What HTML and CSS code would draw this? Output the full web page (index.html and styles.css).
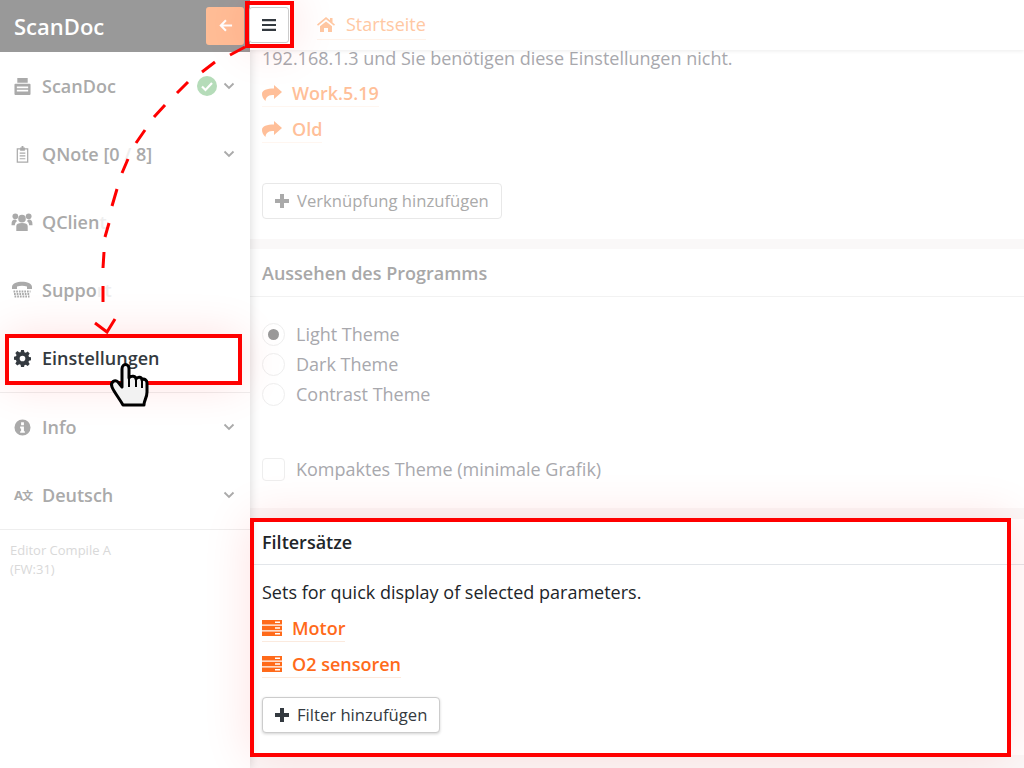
FILE: index.html
```html
<!DOCTYPE html>
<html lang="de">
<head>
<meta charset="utf-8">
<title>ScanDoc</title>
<link rel="stylesheet" href="styles.css">
</head>
<body>
<div class="app">
  <aside class="sidebar">
    <header class="brand">
      <span class="brand-name">ScanDoc</span>
      <span class="brand-back"><svg viewBox="0 0 16 16" width="15" height="15"><path d="M15 8H3M8.500 2.500L3 8l5.500 5.500" fill="none" stroke="#fff" stroke-width="2.200"/></svg></span>
    </header>
    <nav class="nav">
      <a class="item"><svg class="ico" viewBox="0 0 18 18"><path fill-rule="evenodd" d="M3.500 0h11v5h-11zM1.500 6h15q1 0 1 1v10q0 1-1 1h-15q-1 0-1-1V7q0-1 1-1zM3 9v1.800h12V9zM3 12.500v1.800h12v-1.800z"/></svg><span class="lbl">ScanDoc</span><span class="ok"><svg viewBox="0 0 20 20" width="20" height="20"><circle cx="10" cy="10" r="10" fill="#b5dcb9"/><path d="M5 10.500l3.500 3.500L15 7" fill="none" stroke="#fff" stroke-width="2.200"/></svg></span><svg class="chev" viewBox="0 0 12 8"><path d="M1.500 1.500L6 6l4.500-4.500"/></svg></a>
      <a class="item"><svg class="ico" viewBox="0 0 18 18"><path d="M3.500 3h11v14h-11zM6 7.500h6M6 10.500h6M6 13.500h6" fill="none" stroke="#aaa" stroke-width="1.300"/><path d="M6.500 1.500h1.500V0h2v1.500h1.500V5h-5z"/></svg><span class="lbl">QNote [0 <span class="ghost">/</span> 8]</span><svg class="chev" viewBox="0 0 12 8"><path d="M1.500 1.500L6 6l4.500-4.500"/></svg></a>
      <a class="item"><svg class="ico people" viewBox="0 0 22 21"><circle cx="11" cy="7" r="4"/><circle cx="4" cy="4.500" r="3"/><circle cx="18" cy="4.500" r="3"/><path d="M5 20v-5c0-2.500 2-3.500 6-3.500s6 1 6 3.500v5zM0 13c0-3 1-5 4-5l2 1.500c-1.500 1-2.500 2.500-2.500 4.500H0zM22 13c0-3-1-5-4-5l-2 1.500c1.500 1 2.500 2.500 2.500 4.500H22z"/></svg><span class="lbl">QClien<span class="ghost">t</span></span></a>
      <a class="item"><svg class="ico people" viewBox="0 0 22 18"><path d="M1 6c0-7 20-7 20 0v2h-5V5.500c-3-1-7-1-10 0V8H1z"/><path d="M2.500 10.500h17M3 13h16M3.500 15.500h15" stroke="#aaa" stroke-width="1.800" stroke-dasharray="1.700 1" fill="none"/></svg><span class="lbl">Suppo<span class="ghost">rt</span></span></a>
      <a class="item active"><svg class="ico" viewBox="0 0 18 18"><path fill-rule="evenodd" d="M7.500 0h3l.5 2.400 1.500.6 2-1.300 2.100 2.100-1.300 2 .6 1.500 2.400.5v3l-2.400.5-.6 1.500 1.300 2-2.100 2.100-2-1.300-1.500.6-.5 2.400h-3L7 15.600l-1.500-.6-2 1.300-2.100-2.100 1.300-2-.6-1.500L0 10.200v-3l2.100-.5.600-1.500-1.300-2 2.100-2.100 2 1.300L7 2.400zM9 6a3 3 0 1 0 0 6 3 3 0 0 0 0-6z"/></svg><span class="lbl">Einstellungen</span></a>
      <a class="item ruled"><svg class="ico" viewBox="0 0 18 18"><path fill-rule="evenodd" d="M9 .5a8.500 8.500 0 1 1 0 17 8.500 8.500 0 0 1 0-17zM7.500 3.500v3h3v-3zM6.500 8v2h1v3h-1v1.500h5V13h-1V8z"/></svg><span class="lbl">Info</span><svg class="chev" viewBox="0 0 12 8"><path d="M1.500 1.500L6 6l4.500-4.500"/></svg></a>
      <a class="item"><span class="ico-lang">A<span class="zh">文</span></span><span class="lbl">Deutsch</span><svg class="chev" viewBox="0 0 12 8"><path d="M1.500 1.500L6 6l4.500-4.500"/></svg></a>
    </nav>
    <footer class="side-foot">Editor Compile A<br>(FW:31)</footer>
  </aside>

  <div class="main">
    <div class="topbar">
      <span class="burger"><svg viewBox="0 0 14 12" width="14" height="12"><path d="M0 0h14v2.200H0zM0 4.900h14v2.200H0zM0 9.800h14V12H0z"/></svg></span>
      <a class="crumb"><svg viewBox="0 0 18 15" width="18" height="15"><path d="M9 0l4 3.300V1h2.500v4.400L18 7.500 17 8.700 9 2.200 1 8.700 0 7.500zM3 9.300L9 4.500l6 4.800V15h-4v-4H7v4H3z"/></svg>Startseite</a>
    </div>

    <section class="card first">
      <p class="line">192.168.1.3 und Sie benötigen diese Einstellungen nicht.</p>
      <div class="links faded">
        <div><a class="link"><svg viewBox="0 0 20 16" width="20" height="16"><path d="M12 0l8 7-8 7v-4C7 10 4 11 3.500 16 1 14 0 11 0 9 0 5 5 3.500 12 3.500z"/></svg><span>Work.5.19</span></a></div>
        <div><a class="link"><svg viewBox="0 0 20 16" width="20" height="16"><path d="M12 0l8 7-8 7v-4C7 10 4 11 3.500 16 1 14 0 11 0 9 0 5 5 3.500 12 3.500z"/></svg><span>Old</span></a></div>
      </div>
      <a class="btn faded-btn"><span class="plus"></span>Verknüpfung hinzufügen</a>
    </section>

    <section class="card second">
      <h2 class="card-head muted">Aussehen des Programms</h2>
      <div class="card-body options">
        <label class="opt"><span class="radio on"></span>Light Theme</label>
        <label class="opt"><span class="radio"></span>Dark Theme</label>
        <label class="opt"><span class="radio"></span>Contrast Theme</label>
        <label class="opt check"><span class="box"></span>Kompaktes Theme (minimale Grafik)</label>
      </div>
    </section>

    <section class="card third">
      <h2 class="card-head">Filtersätze</h2>
      <div class="card-body">
        <p class="line dark">Sets for quick display of selected parameters.</p>
        <div class="links">
          <div><a class="link strong"><svg viewBox="0 0 20 16" width="20" height="16"><path fill-rule="evenodd" d="M0 0h20v4.500H0zM13 1.500v1.500h5V1.500zM0 5.800h20v4.400H0zM13 7.300v1.400h5V7.300zM0 11.500h20V16H0zM13 13v1.500h5V13z"/></svg><span>Motor</span></a></div>
          <div><a class="link strong"><svg viewBox="0 0 20 16" width="20" height="16"><path fill-rule="evenodd" d="M0 0h20v4.500H0zM13 1.500v1.500h5V1.500zM0 5.800h20v4.400H0zM13 7.300v1.400h5V7.300zM0 11.500h20V16H0zM13 13v1.500h5V13z"/></svg><span>O2 sensoren</span></a></div>
        </div>
        <a class="btn"><span class="plus"></span>Filter hinzufügen</a>
      </div>
    </section>
  </div>
</div>

<div class="frame f-burger"></div>
<div class="frame f-settings"></div>
<div class="frame f-filter"></div>
<svg class="annot" viewBox="0 0 1024 768" width="1024" height="768">
  <path class="dash" d="M245 47L230 55M215 62L202 72M188 82L177 93M165 105L154 117M145 130L136 143M128 159L122 173M117 189L112 206M109 223L105 237M104 252L103 268M103 286L103 302"/>
  <path class="arrow" d="M95 323L107 332L115 319"/>
  <path class="hand" d="M123 405C119 398 114 392 112 387C110 382 115 379 118 382L122 387V369C122 363 129 363 129 369V378C131 375 136 376 136 379C138 376 142 377 142 380C144 378 147 380 147 383V392C147 398 144 400 144 405Z"/>
  <path class="hand-line" d="M129 378v9M136 379v8M142 380v8"/>
</svg>
</body>
</html>
```
FILE: styles.css
```css
* { box-sizing: border-box; }
html, body { margin: 0; height: 768px; overflow: hidden; background: #fff; }
body { font-family: "Open Sans", "Noto Sans", sans-serif; font-size: 18px; color: #a8a8ad; }
p, h2 { margin: 0; }

.app { display: flex; width: 1024px; height: 768px; }

/* sidebar */
.sidebar { width: 250px; flex: none; background: #fff; display: flex; flex-direction: column; position: relative; z-index: 1; box-shadow: 0 0 10px rgba(0,0,0,.16); }
.brand { height: 52px; background: #999; display: flex; align-items: center; justify-content: space-between; padding: 0 6px 0 14px; }
.brand-name { font-size: 22px; font-weight: 600; color: #fff; }
.brand-back { width: 38px; height: 38px; margin-top: -1px; border-radius: 3px; background: #ffbd96; display: flex; align-items: center; justify-content: center; }
.nav { display: flex; flex-direction: column; }
.item { height: 68px; display: flex; align-items: center; padding: 0 14px; font-size: 18px; font-weight: 600; color: #aaa; }
.item.active { color: #343a40; }
.item.ruled { border-top: 1px solid #eee; height: 69px; }
.ico { width: 17px; height: 17px; fill: #aaa; margin-right: 11px; flex: none; }
.ico.people { width: 22px; height: 20px; margin-left: -3px; margin-right: 9px; }
.active .ico { fill: #343a40; }
.ico-lang { width: 17px; margin-right: 11px; font-size: 13px; font-weight: 700; color: #aaa; white-space: nowrap; letter-spacing: -1px; }
.zh { font-family: "Noto Sans CJK SC", sans-serif; font-size: 11px; }
.lbl { flex: 1; white-space: nowrap; }
.ghost { color: #eee; }
.ok { display: flex; margin-right: 6px; }
.chev { width: 12px; height: 8px; fill: none; stroke: #aaa; stroke-width: 1.800; margin-right: 1px; flex: none; }
.side-foot { border-top: 1px solid #eee; padding: 11px 10px; font-size: 13px; line-height: 19px; color: #d9d9d9; }

/* main column */
.main { flex: 1; min-width: 0; display: flex; flex-direction: column; background: #faf8f8; }
.topbar { height: 50px; flex: none; background: #fff; display: flex; align-items: center; box-shadow: 0 1px 4px rgba(0,0,0,.08); position: relative; z-index: 2; }
.burger { width: 40px; height: 36px; margin: 7px 0 0 -1px; align-self: flex-start; background: #fff; border: 1px solid #ccc; border-radius: 3px; display: flex; align-items: center; justify-content: center; fill: #343a40; }
.crumb { margin-left: 28px; margin-top: -1px; display: flex; align-items: center; gap: 11px; font-size: 18px; color: #ffc8a3; fill: #ffc8a3; border-bottom: 1px solid #fff3ea; height: 31px; }

.card { background: #fff; padding: 0 12px; }
.first { height: 189px; flex: none; }
.line { font-size: 18px; line-height: 24px; color: #a8a8ad; margin-top: -4px; }
.line.dark { color: #212529; margin-top: 0; }
.links { display: flex; flex-direction: column; }
.links > div { height: 36px; display: flex; align-items: center; }
.link { display: inline-flex; align-items: center; gap: 10px; font-size: 18px; font-weight: 600; height: 28px; margin-top: 2px; color: #ff6a1a; fill: #ff6a1a; border-bottom: 1px solid #fbeade; }
.faded .link { color: #ffbf99; fill: #ffbf99; border-bottom-color: #fff6f0; }
.faded { margin-top: 4px; }
.btn { display: inline-flex; align-items: center; height: 36px; padding: 0 12px 1px; gap: 8px; font-size: 16.650px; color: #343a40; border: 1px solid #ccc; border-radius: 4px; background: #fff; box-shadow: 0 1px 3px rgba(0,0,0,.18); }
.faded-btn { color: #aaa; border-color: #e8e8e8; box-shadow: none; margin-top: 37px; }
.plus { width: 14px; height: 14px; background: linear-gradient(currentColor, currentColor) center/14px 4px no-repeat, linear-gradient(currentColor, currentColor) center/4px 14px no-repeat; }

.second { margin-top: 10px; height: 259px; flex: none; }
.card-head { height: 48px; margin: 0 -12px; padding: 0 12px; display: flex; align-items: center; font-size: 18px; font-weight: 600; color: #212529; border-bottom: 1px solid #e3e6ea; }
.card-head.muted { color: #a8a8a8; border-bottom-color: #f2f2f2; }
.options { display: flex; flex-direction: column; padding-top: 22px; }
.opt { height: 30px; display: flex; align-items: center; gap: 11px; color: #a8a8ad; }
.opt.check { margin-top: 45px; }
.radio, .box { width: 23px; height: 23px; border: 1px solid #eee; background: #fff; flex: none; }
.radio { border-radius: 50%; position: relative; }
.radio.on::after { content: ""; position: absolute; inset: 5px; border-radius: 50%; background: #999; }
.box { border-radius: 4px; }

.third { margin-top: 11px; height: 236px; flex: none; margin-bottom: 12px; }
.third .card-head { height: 46px; }
.third .card-body { padding-top: 15px; }
.third .links { margin-top: 5px; }
.third .btn { margin-top: 16px; }

/* annotations over the page */
.frame { position: absolute; z-index: 3; border: 4px solid #f00; box-shadow: 0 0 45px rgba(255,0,0,.12); pointer-events: none; }
.f-burger { left: 245px; top: 1px; width: 49px; height: 47px; }
.f-settings { left: 5px; top: 334px; width: 237px; height: 51px; }
.f-filter { left: 250px; top: 518px; width: 761px; height: 239px; }
.annot { position: absolute; z-index: 4; left: 0; top: 0; pointer-events: none; }
.dash { fill: none; stroke: #f00; stroke-width: 3; }
.arrow { fill: none; stroke: #f00; stroke-width: 3; }
.hand { fill: #f2f2f2; stroke: #000; stroke-width: 3; stroke-linejoin: round; }
.hand-line { fill: none; stroke: #000; stroke-width: 2; }
```
